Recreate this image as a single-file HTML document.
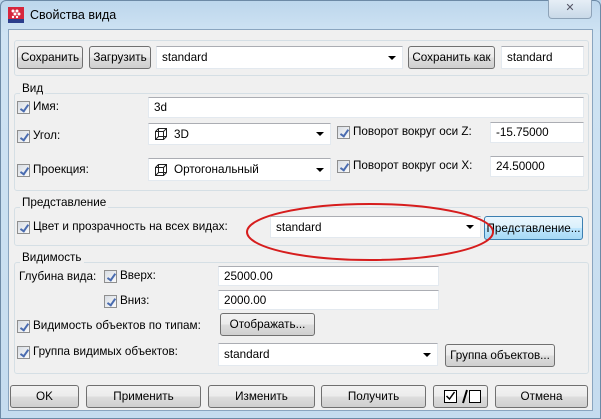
<!DOCTYPE html>
<html><head><meta charset="utf-8">
<style>
*{box-sizing:border-box;margin:0;padding:0}
body{width:601px;height:419px;overflow:hidden;font-family:"Liberation Sans",sans-serif;font-size:11.7px;color:#000;position:relative;
background:linear-gradient(180deg,#bcd6ec 0%,#cfe3f3 8%,#c5dcef 100%)}
.a{position:absolute}
.frame{left:0;top:0;width:601px;height:419px;border:1px solid #6d8aa6;border-radius:6px 6px 0 0}
.client{left:8px;top:29px;width:585px;height:382px;background:#f0f0f0;border:1px solid #8aa5bf}
.grp{position:absolute;border:1px solid #d5dfe5;border-radius:3px}
.lbl{position:absolute;background:#f0f0f0;padding:0 2px;white-space:nowrap}
.t{position:absolute;white-space:nowrap}
.inp{position:absolute;background:#fff;border:1px solid #e3e9ef;border-top-color:#abadb3;padding-left:5px;display:flex;align-items:center;white-space:nowrap}
.btn{position:absolute;border:1px solid #707070;border-radius:3px;background:linear-gradient(#f2f2f2 0%,#ebebeb 50%,#dddddd 51%,#cfcfcf 100%);display:flex;align-items:center;justify-content:center;white-space:nowrap}
.cb{position:absolute;width:13px;height:13px;border:1px solid #8f8f8f;background:linear-gradient(135deg,#d8dde4,#fafafa);}
.cb:after{content:"";position:absolute;left:4px;top:1px;width:3px;height:7px;border:solid #4a6cb0;border-width:0 2px 2px 0;transform:rotate(35deg)}
.arr{position:absolute;right:6px;top:50%;margin-top:-2px;border:4px solid transparent;border-top:4px solid #000;border-bottom:0}
</style></head><body>
<div class="a frame"></div>
<svg class="a" style="left:8px;top:7px" width="16" height="16"><rect x="0" y="0" width="16" height="12" fill="#d7263d"/><rect x="0" y="12" width="16" height="4" fill="#2c3e8c"/><circle cx="5" cy="4" r="1.5" fill="#fff"/><circle cx="9" cy="4" r="1.5" fill="#fff"/><circle cx="7" cy="7" r="1.5" fill="#fff"/><circle cx="11" cy="7" r="1.5" fill="#fff"/><circle cx="5" cy="10" r="1.2" fill="#fff"/><circle cx="9" cy="10" r="1.2" fill="#fff"/></svg>
<div class="t" style="left:30px;top:8px;font-size:12.5px">Свойства вида</div>
<div class="a" style="left:548px;top:0;width:44px;height:19px;border:1px solid #8ea3b8;border-top:0;border-radius:0 0 4px 4px;background:linear-gradient(#e6eef6,#c9d9e8);color:#556;text-align:center;font-size:11px;line-height:17px">✕</div>
<div class="a client"></div>

<div class="grp" style="left:14px;top:40px;width:575px;height:36px"></div>
<div class="btn" style="left:17px;top:46px;width:66px;height:23px">Сохранить</div>
<div class="btn" style="left:89px;top:46px;width:62px;height:23px">Загрузить</div>
<div class="inp" style="left:156px;top:46px;width:247px;height:23px">standard<span class="arr"></span></div>
<div class="btn" style="left:408px;top:46px;width:87px;height:23px">Сохранить как</div>
<div class="inp" style="left:501px;top:46px;width:83px;height:23px">standard</div>

<div class="grp" style="left:14px;top:93px;width:575px;height:98px"></div>
<div class="lbl" style="left:20px;top:82px">Вид</div>
<div class="cb" style="left:17px;top:101px"></div><div class="t" style="left:33px;top:100px">Имя:</div>
<div class="inp" style="left:148px;top:97px;width:436px;height:21px">3d</div>
<div class="cb" style="left:17px;top:130px"></div><div class="t" style="left:33px;top:129px">Угол:</div>
<div class="inp" style="left:148px;top:123px;width:183px;height:22px"><svg width="14" height="14" style="margin-right:6px"><path d="M1.5 4.5h8v8h-8zM1.5 4.5l3-3h8v8l-3 3M9.5 4.5l3-3M4.5 1.5v8h8M4.5 9.5l-3 3" fill="none" stroke="#222"/></svg>3D<span class="arr"></span></div>
<div class="cb" style="left:337px;top:126px"></div><div class="t" style="left:353px;top:125px">Поворот вокруг оси Z:</div>
<div class="inp" style="left:490px;top:122px;width:94px;height:21px">-15.75000</div>
<div class="cb" style="left:17px;top:164px"></div><div class="t" style="left:33px;top:163px">Проекция:</div>
<div class="inp" style="left:148px;top:158px;width:183px;height:23px"><svg width="14" height="14" style="margin-right:6px"><path d="M1.5 4.5h8v8h-8zM1.5 4.5l3-3h8v8l-3 3M9.5 4.5l3-3M4.5 1.5v8h8M4.5 9.5l-3 3" fill="none" stroke="#222"/></svg>Ортогональный<span class="arr"></span></div>
<div class="cb" style="left:337px;top:160px"></div><div class="t" style="left:353px;top:159px">Поворот вокруг оси X:</div>
<div class="inp" style="left:490px;top:156px;width:94px;height:21px">24.50000</div>

<div class="grp" style="left:14px;top:207px;width:575px;height:39px"></div>
<div class="lbl" style="left:20px;top:196px">Представление</div>
<div class="cb" style="left:17px;top:221px"></div><div class="t" style="left:33px;top:220px">Цвет и прозрачность на всех видах:</div>
<div class="inp" style="left:270px;top:216px;width:211px;height:22px">standard<span class="arr"></span></div>
<div class="btn" style="left:484px;top:216px;width:99px;height:24px;border-color:#3c7fb1;background:linear-gradient(#eaf6fd 0%,#d9f0fc 50%,#bee6fd 51%,#a7d9f5 100%)">Представление...</div>

<div class="grp" style="left:14px;top:262px;width:575px;height:112px"></div>
<div class="lbl" style="left:20px;top:251px">Видимость</div>
<div class="t" style="left:19px;top:270px">Глубина вида:</div>
<div class="cb" style="left:104px;top:270px"></div><div class="t" style="left:120px;top:269px">Вверх:</div>
<div class="inp" style="left:218px;top:266px;width:221px;height:20px">25000.00</div>
<div class="cb" style="left:104px;top:295px"></div><div class="t" style="left:120px;top:294px">Вниз:</div>
<div class="inp" style="left:218px;top:290px;width:221px;height:20px">2000.00</div>
<div class="cb" style="left:17px;top:320px"></div><div class="t" style="left:33px;top:319px">Видимость объектов по типам:</div>
<div class="btn" style="left:220px;top:313px;width:95px;height:23px">Отображать...</div>
<div class="cb" style="left:17px;top:346px"></div><div class="t" style="left:33px;top:345px">Группа видимых объектов:</div>
<div class="inp" style="left:218px;top:343px;width:220px;height:23px">standard<span class="arr"></span></div>
<div class="btn" style="left:445px;top:344px;width:110px;height:23px">Группа объектов...</div>

<div class="btn" style="left:10px;top:385px;width:69px;height:23px">OK</div>
<div class="btn" style="left:86px;top:385px;width:115px;height:23px">Применить</div>
<div class="btn" style="left:208px;top:385px;width:107px;height:23px">Изменить</div>
<div class="btn" style="left:321px;top:385px;width:105px;height:23px">Получить</div>
<div class="btn" style="left:433px;top:385px;width:55px;height:23px"><svg width="40" height="16"><rect x="3.5" y="1.5" width="12" height="12" fill="#fff" stroke="#000"/><path d="M5.5 7l3 3 5-7" fill="none" stroke="#000" stroke-width="1.5"/><path d="M22 14l4-13" stroke="#000" stroke-width="2"/><rect x="28.5" y="1.5" width="11" height="12" fill="#fff" stroke="#000"/></svg></div>
<div class="btn" style="left:495px;top:385px;width:93px;height:23px">Отмена</div>

<svg class="a" style="left:0;top:0" width="601" height="419"><ellipse cx="370" cy="232" rx="123" ry="28" fill="none" stroke="#d61d1d" stroke-width="2"/></svg>
</body></html>
